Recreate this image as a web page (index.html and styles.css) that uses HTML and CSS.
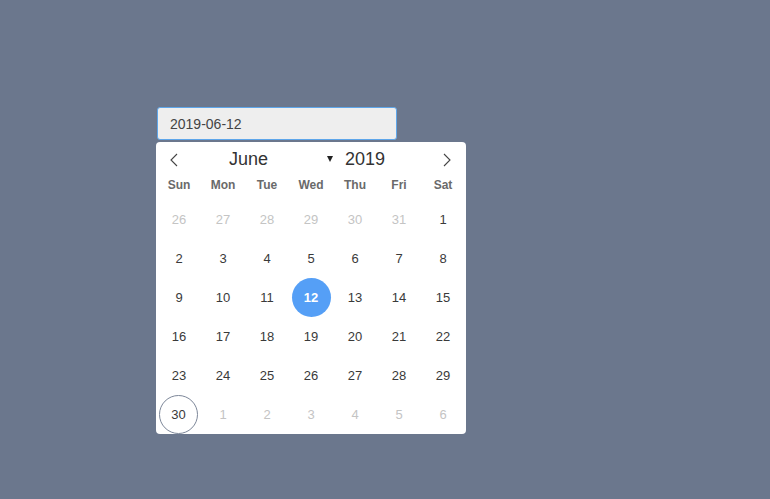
FILE: index.html
```html
<!DOCTYPE html>
<html>
<head>
<meta charset="utf-8">
<link rel="stylesheet" href="styles.css">
</head>
<body>
<div class="page">
  <div class="picker">
    <div class="input">2019-06-12</div>
    <div class="cal">
      <div class="head">
        <div class="nav"><svg width="10" height="14" viewBox="0 0 10 14"><path d="M8 1 L2 7 L8 13" fill="none" stroke="#444" stroke-width="1.1"/></svg></div>
        <div class="month"><span class="mname">June</span><svg class="caret" width="6" height="6" viewBox="0 0 6 6"><path d="M0 0 L6 0 L3 6 Z" fill="#222"/></svg></div>
        <div class="year">2019</div>
        <div class="nav next"><svg width="10" height="14" viewBox="0 0 10 14"><path d="M2 1 L8 7 L2 13" fill="none" stroke="#444" stroke-width="1.1"/></svg></div>
      </div>
      <div class="wd"><span>Sun</span><span>Mon</span><span>Tue</span><span>Wed</span><span>Thu</span><span>Fri</span><span>Sat</span></div>
      <div class="grid">
        <span class="o">26</span><span class="o">27</span><span class="o">28</span><span class="o">29</span><span class="o">30</span><span class="o">31</span><span>1</span>
        <span>2</span><span>3</span><span>4</span><span>5</span><span>6</span><span>7</span><span>8</span>
        <span>9</span><span>10</span><span>11</span><span class="sel">12</span><span>13</span><span>14</span><span>15</span>
        <span>16</span><span>17</span><span>18</span><span>19</span><span>20</span><span>21</span><span>22</span>
        <span>23</span><span>24</span><span>25</span><span>26</span><span>27</span><span>28</span><span>29</span>
        <span class="today">30</span><span class="o">1</span><span class="o">2</span><span class="o">3</span><span class="o">4</span><span class="o">5</span><span class="o">6</span>
      </div>
    </div>
  </div>
</div>
</body>
</html>
```
FILE: styles.css
```css
html, body {
  margin: 0;
  padding: 0;
  background: #6b778d;
  height: 100%;
  font-family: "Liberation Sans", Arial, sans-serif;
}
.page {
  padding: 107px 0 0 156px;
}
.picker {
  width: 310px;
}
.input {
  margin-left: 1px;
  width: 240px;
  height: 33px;
  box-sizing: border-box;
  border: 1px solid #5ea6ea;
  border-radius: 3px;
  background: #eeeeee;
  color: #444;
  font-size: 14px;
  line-height: 31px;
  padding: 1px 0 0 12px;
}
.cal {
  margin-top: 2px;
  background: #fff;
  border-radius: 4px;
  width: 310px;
  height: 292px;
  box-sizing: border-box;
  padding: 0 1px;
}
.head {
  display: flex;
  align-items: center;
  height: 34px;
  color: #333;
  font-size: 18px;
  padding-top: 1px;
  box-sizing: border-box;
}
.nav {
  width: 33px;
  display: flex;
  justify-content: center;
  align-items: center;
  height: 33px;
}
.nav.next {
  width: 36px;
  margin-left: auto;
}
.month {
  display: flex;
  align-items: center;
  width: 155px;
  padding-left: 39px;
  box-sizing: border-box;
}
.mname {
  width: 98px;
}
.caret {
  margin-top: -1px;
}
.wd {
  display: grid;
  grid-template-columns: repeat(7, 44px);
  height: 16px;
  line-height: 16px;
  font-size: 12px;
  font-weight: bold;
  color: #6a6a6a;
  text-align: center;
  margin: 1px 0 7px;
}
.grid {
  display: grid;
  grid-template-columns: repeat(7, 44px);
  grid-auto-rows: 39px;
  font-size: 13px;
  color: #3a3a3a;
  text-align: center;
}
.grid span {
  display: flex;
  align-items: center;
  justify-content: center;
}
.grid .o {
  color: #c4c4c4;
}
.grid .sel,
.grid .today {
  width: 39px;
  height: 39px;
  border-radius: 50%;
  justify-self: center;
  box-sizing: border-box;
}
.grid .sel {
  background: #559ff6;
  color: #fff;
  font-weight: bold;
}
.grid .today {
  border: 1px solid #7d8799;
  margin-left: -1px;
}
```
